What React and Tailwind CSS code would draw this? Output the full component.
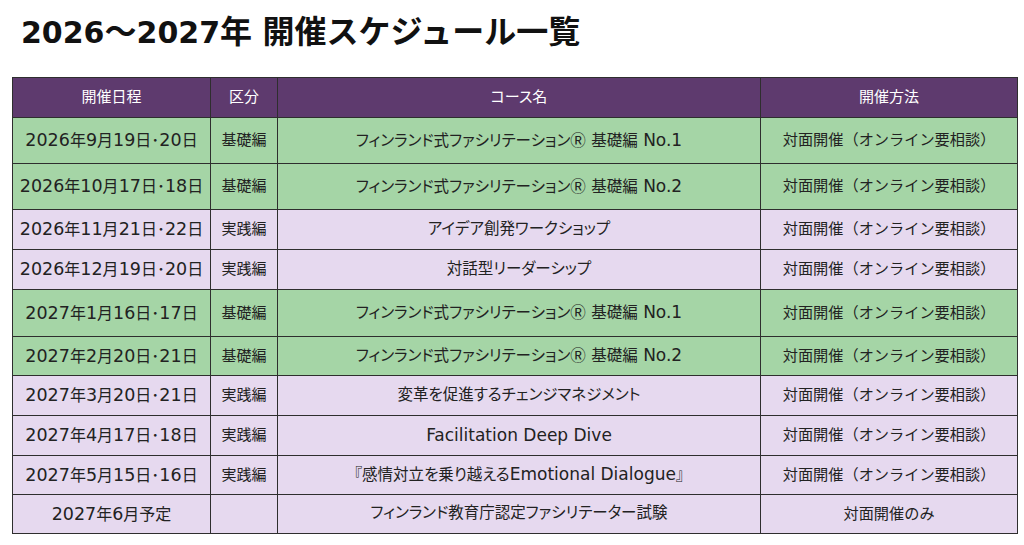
const rows = [
  { date: "2026年9月19日･20日", kind: "基礎編", course: "フィンランド式ファシリテーションⓇ 基礎編 No.1", method: "対面開催（オンライン要相談）", tone: "green", h: "h-[46px]" },
  { date: "2026年10月17日･18日", kind: "基礎編", course: "フィンランド式ファシリテーションⓇ 基礎編 No.2", method: "対面開催（オンライン要相談）", tone: "green", h: "h-[46px]" },
  { date: "2026年11月21日･22日", kind: "実践編", course: "アイデア創発ワークショップ", method: "対面開催（オンライン要相談）", tone: "purple", h: "h-[40px]" },
  { date: "2026年12月19日･20日", kind: "実践編", course: "対話型リーダーシップ", method: "対面開催（オンライン要相談）", tone: "purple", h: "h-[40px]" },
  { date: "2027年1月16日･17日", kind: "基礎編", course: "フィンランド式ファシリテーションⓇ 基礎編 No.1", method: "対面開催（オンライン要相談）", tone: "green", h: "h-[47px]" },
  { date: "2027年2月20日･21日", kind: "基礎編", course: "フィンランド式ファシリテーションⓇ 基礎編 No.2", method: "対面開催（オンライン要相談）", tone: "green", h: "h-[39px]" },
  { date: "2027年3月20日･21日", kind: "実践編", course: "変革を促進するチェンジマネジメント", method: "対面開催（オンライン要相談）", tone: "purple", h: "h-[40px]" },
  { date: "2027年4月17日･18日", kind: "実践編", course: "Facilitation Deep Dive", method: "対面開催（オンライン要相談）", tone: "purple", h: "h-[40px]" },
  { date: "2027年5月15日･16日", kind: "実践編", course: "『感情対立を乗り越えるEmotional Dialogue』", method: "対面開催（オンライン要相談）", tone: "purple", h: "h-[39px]" },
  { date: "2027年6月予定", kind: "", course: "フィンランド教育庁認定ファシリテーター試験", method: "対面開催のみ", tone: "purple", h: "h-[39px]" },
];

const Mixed = ({ text, latin }) =>
  text.split(/([A-Za-z0-9.\s]+)/).map((part, i) =>
    part === "" ? null : /^[A-Za-z0-9.\s]+$/.test(part) ? (
      <span key={i} className={latin}>{part}</span>
    ) : (
      <span key={i}>{part}</span>
    )
  );

const cell = "border border-[#2e2e2e] text-center align-middle px-1 whitespace-nowrap";

export default function App() {
  return (
    <div className="w-[1024px] h-[545px] bg-white font-['DejaVu_Sans','Noto_Sans_CJK_JP',sans-serif] text-[#222] overflow-hidden">
      {/* Title */}
      <h1 className="pl-[21px] pt-[10px] h-[77px] text-[32px] font-bold leading-[44px] text-[#111]">
        <Mixed text="2026～2027年 開催スケジュール一覧" latin="text-[30px]" />
      </h1>

      {/* Schedule table */}
      <table className="ml-[12px] w-[1005px] border-collapse table-fixed [font-feature-settings:'palt']">
        <colgroup>
          <col className="w-[198px]" />
          <col className="w-[67px]" />
          <col className="w-[483px]" />
          <col className="w-[257px]" />
        </colgroup>
        <thead>
          <tr className="h-[40px] bg-[#5e3a6e] text-white text-[15px]">
            <th className={`${cell} font-normal`}>開催日程</th>
            <th className={`${cell} font-normal`}>区分</th>
            <th className={`${cell} font-normal`}>コース名</th>
            <th className={`${cell} font-normal`}>開催方法</th>
          </tr>
        </thead>
        <tbody>
          {rows.map((row, i) => (
            <tr
              key={i}
              className={`${row.h} ${row.tone === "green" ? "bg-[#a5d5a6]" : "bg-[#e6d9ef]"}`}
            >
              <td className={`${cell} text-[16px]`}>
                <Mixed text={row.date} latin="text-[17.5px]" />
              </td>
              <td className={`${cell} text-[15px]`}>{row.kind}</td>
              <td className={`${cell} text-[15.5px]`}>
                <Mixed text={row.course} latin="text-[17px]" />
              </td>
              <td className={`${cell} text-[15.2px] [font-feature-settings:normal] [text-spacing-trim:space-all]`}>
                {row.method}
              </td>
            </tr>
          ))}
        </tbody>
      </table>
    </div>
  );
}
